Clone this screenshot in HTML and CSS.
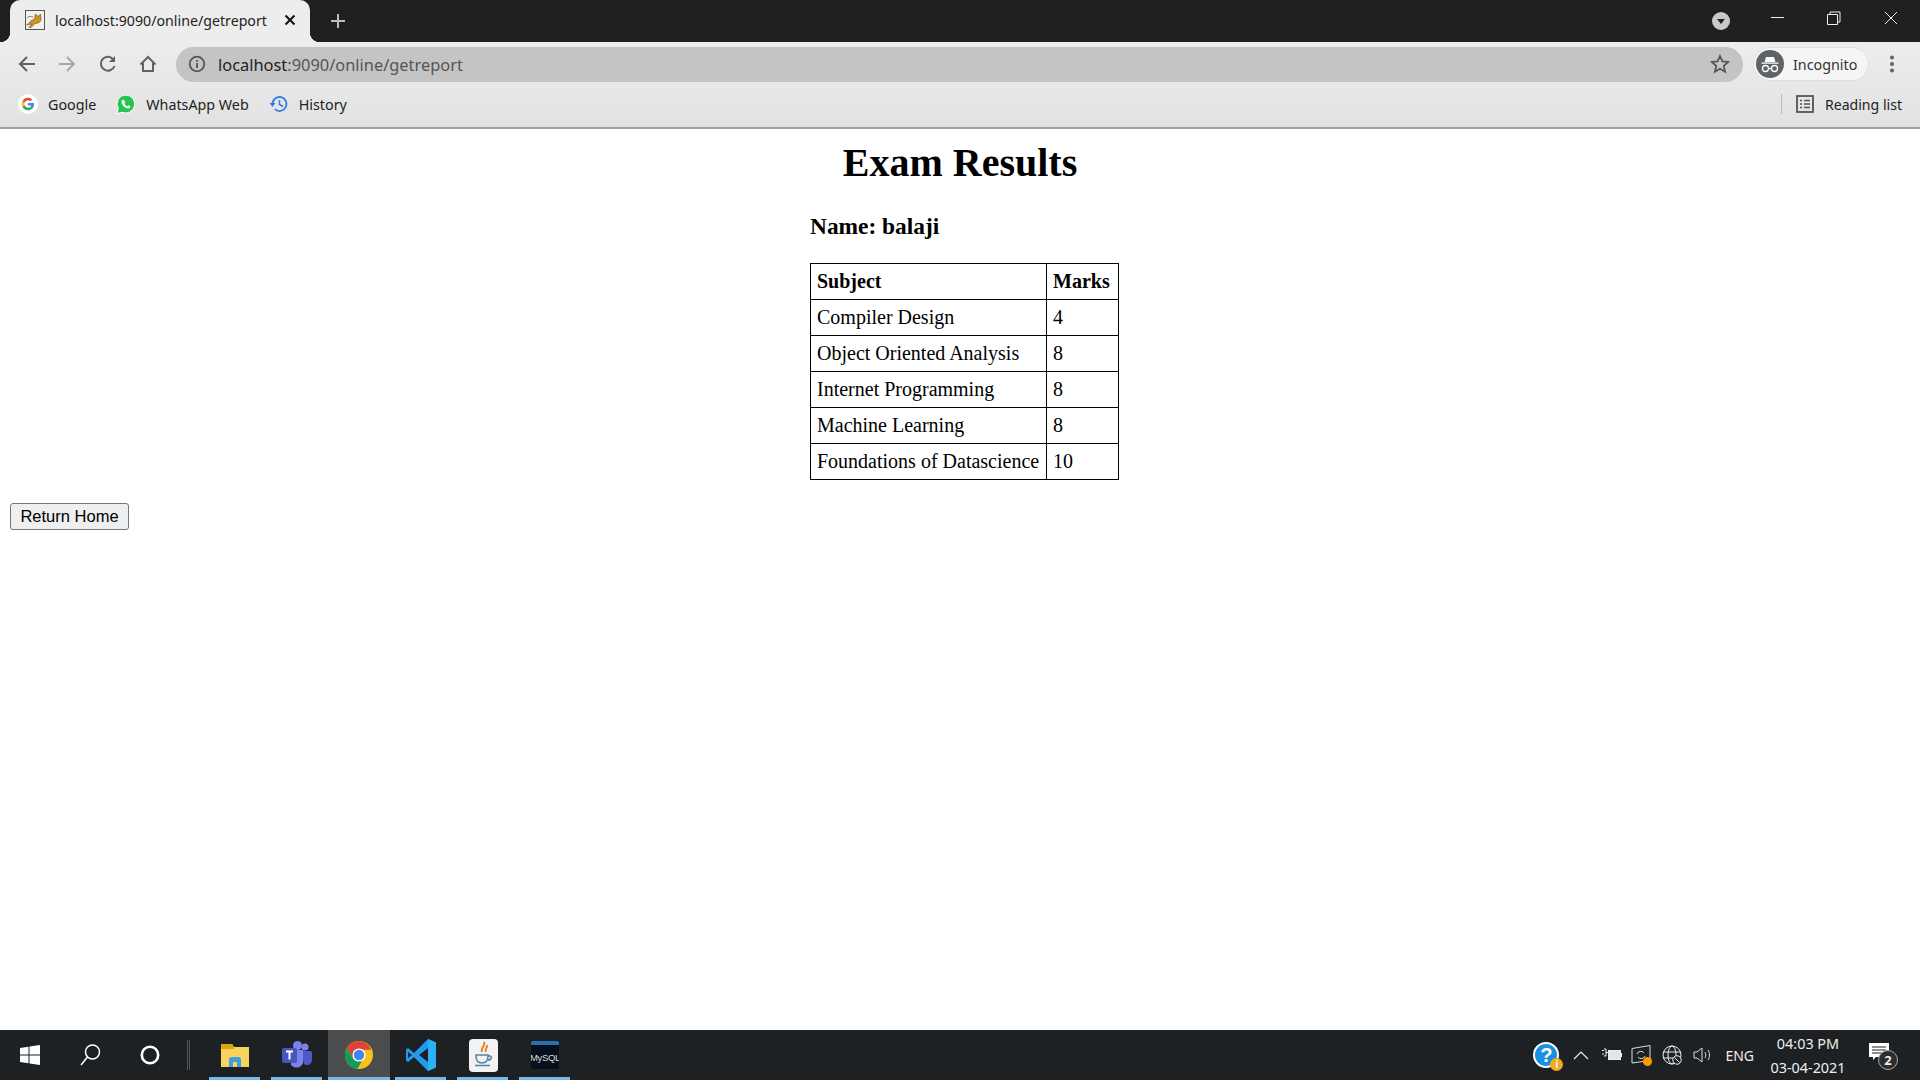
FILE: index.html
```html
<!DOCTYPE html>
<html lang="en">
<head>
  <meta charset="UTF-8" />
  <title>localhost:9090/online/getreport</title>
  <link rel="stylesheet" href="styles.css">
</head>
<body>
  <div class="screen">
    <!-- tab strip -->
    <div class="tabstrip">
      <div class="tab">
        <svg class="favicon" width="20" height="20" viewBox="0 0 20 20"><rect x="0.5" y="0.5" width="19" height="19" fill="#f4f1ea" stroke="#555"/><path d="M1.500 15c3-1 3-4 6-5l2-1 1-5 1.500 2h2l1.500-2 .5 5c0 2-1 3-3 4l-3 .5-4 4H4l3-3.500z" fill="#c9962f" stroke="#6b4a12" stroke-width=".6"/><path d="M2 8c2-2 4-2 6-1" fill="none" stroke="#666" stroke-width=".8"/></svg>
        <span class="tab-title">localhost:9090/online/getreport</span>
        <svg class="tab-close" width="12" height="12" viewBox="0 0 12 12"><path d="M1.500 1.500l9 9M10.500 1.500l-9 9" stroke="#111" stroke-width="2"/></svg>
      </div>
      <svg class="new-tab" width="16" height="16" viewBox="0 0 16 16"><path d="M8 1v14M1 8h14" stroke="#bdbdbd" stroke-width="2"/></svg>
      <div class="strip-right">
        <svg class="tab-search" width="18" height="18" viewBox="0 0 18 18"><circle cx="9" cy="9" r="9" fill="#c8c8c8"/><path d="M5 7h8l-4 5z" fill="#222"/></svg>
        <svg class="win-btn" width="16" height="16" viewBox="0 0 16 16"><path d="M1 7.500h13" stroke="#eee" stroke-width="1"/></svg>
        <svg class="win-btn" width="16" height="16" viewBox="0 0 16 16"><path d="M1.500 4.500h10v10h-10zM4 4.500v-2.500h10v10h-2.500" fill="none" stroke="#eee" stroke-width="1"/></svg>
        <svg class="win-btn" width="16" height="16" viewBox="0 0 16 16"><path d="M2 2l12 12M14 2l-12 12" stroke="#eee" stroke-width="1"/></svg>
      </div>
    </div>

    <!-- toolbar -->
    <div class="chrome-bars">
      <div class="toolbar">
        <svg class="nav-icon" width="20" height="20" viewBox="0 0 20 20"><path d="M18 10H3M10 3l-7 7 7 7" fill="none" stroke="#5f6368" stroke-width="2"/></svg>
        <svg class="nav-icon" width="20" height="20" viewBox="0 0 20 20"><path d="M2 10h15M10 3l7 7-7 7" fill="none" stroke="#a9a9a9" stroke-width="2"/></svg>
        <svg class="nav-icon" width="20" height="20" viewBox="0 0 20 20"><path d="M16.500 12a7 7 0 1 1-1-6.500" fill="none" stroke="#5f6368" stroke-width="2"/><path d="M17 2v6h-6z" fill="#5f6368"/></svg>
        <svg class="nav-icon" width="20" height="20" viewBox="0 0 20 20"><path d="M2.500 10.500L10 3l7.500 7.500M5 9v8h10V9" fill="none" stroke="#5f6368" stroke-width="2"/></svg>
        <div class="omnibox">
          <svg width="18" height="18" viewBox="0 0 18 18"><circle cx="9" cy="9" r="7.300" fill="none" stroke="#555" stroke-width="1.800"/><path d="M9 8v5M9 5v1.800" stroke="#555" stroke-width="1.800"/></svg>
          <span class="url"><span class="url-host">localhost</span>:9090/online/getreport</span>
          <svg class="star" width="20" height="20" viewBox="0 0 20 20"><path d="M10 2l2.400 5.400 5.800.6-4.400 3.900 1.300 5.800L10 14.700l-5.100 3 1.300-5.800L1.800 8l5.800-.6z" fill="none" stroke="#555" stroke-width="1.700"/></svg>
        </div>
        <div class="profile">
          <svg width="28" height="28" viewBox="0 0 28 28"><circle cx="14" cy="14" r="14" fill="#5f6368"/><path d="M10 7h8l1.500 5h-11zM5.500 12.500h17v1.300h-17z" fill="#fff"/><circle cx="9.500" cy="18.500" r="3" fill="none" stroke="#fff" stroke-width="1.300"/><circle cx="18.500" cy="18.500" r="3" fill="none" stroke="#fff" stroke-width="1.300"/><path d="M12.500 18.500h3" stroke="#fff" stroke-width="1.300"/></svg>
          <span>Incognito</span>
        </div>
        <svg class="dots" width="6" height="18" viewBox="0 0 6 18"><circle cx="3" cy="2.500" r="2" fill="#5f6368"/><circle cx="3" cy="9" r="2" fill="#5f6368"/><circle cx="3" cy="15.500" r="2" fill="#5f6368"/></svg>
      </div>

      <!-- bookmarks -->
      <div class="bookmarks">
        <div class="bookmark">
          <svg width="20" height="20" viewBox="0 0 20 20"><circle cx="10" cy="10" r="10" fill="#fff"/><path d="M16 10.200c0-.5 0-.9-.1-1.300H10v2.500h3.400a3 3 0 0 1-1.300 1.900l2 1.600c1.200-1.100 1.900-2.700 1.900-4.700z" fill="#4285f4"/><path d="M10 16.200c1.700 0 3.100-.6 4.100-1.500l-2-1.600c-.5.400-1.200.6-2.100.6-1.600 0-3-1.100-3.500-2.600l-2.100 1.600c1 2 3.200 3.500 5.600 3.500z" fill="#34a853"/><path d="M6.500 11.100a3.700 3.700 0 0 1 0-2.300L4.400 7.200a6.200 6.200 0 0 0 0 5.500z" fill="#fbbc05"/><path d="M10 6.300c.9 0 1.700.3 2.400.9l1.800-1.800A6.200 6.200 0 0 0 4.400 7.200l2.100 1.600C7 7.400 8.400 6.300 10 6.300z" fill="#ea4335"/></svg>
          <span>Google</span>
        </div>
        <div class="bookmark">
          <svg width="20" height="20" viewBox="0 0 20 20"><path d="M10 1a9 9 0 0 0-7.700 13.600L1 19.500l5-1.300A9 9 0 1 0 10 1z" fill="#25c350" stroke="#fff" stroke-width="1"/><path d="M7 5.500c-.5 0-1.500.9-1.500 2.400 0 2.500 3.500 6.300 6.500 6.600 1.400.1 2.500-1 2.500-2 0-.3-1.900-1.400-2.300-1.300l-1 1c-1-.3-2.400-1.700-2.800-2.800l.9-1C9 8 8 5.600 7 5.500z" fill="#fff"/></svg>
          <span>WhatsApp Web</span>
        </div>
        <div class="bookmark">
          <svg width="20" height="20" viewBox="0 0 20 20"><path d="M3.500 10a7 7 0 1 1 2.300 5.200" fill="none" stroke="#2f7de1" stroke-width="1.800"/><path d="M.5 9h6L3.500 13z" fill="#2f7de1"/><path d="M10.500 6v4.500l3.500 2" fill="none" stroke="#2f7de1" stroke-width="1.600"/></svg>
          <span>History</span>
        </div>
        <div class="reading">
          <svg width="18" height="18" viewBox="0 0 18 18"><rect x="1" y="1" width="16" height="16" fill="none" stroke="#555" stroke-width="1.800"/><path d="M4 5.500h2M8 5.500h6M4 9h2M8 9h6M4 12.500h2M8 12.500h6" stroke="#555" stroke-width="1.500"/></svg>
          <span>Reading list</span>
        </div>
      </div>
    </div>

    <!-- page content -->
    <main class="page">
      <h1>Exam Results</h1>
      <div class="report">
        <h3>Name: balaji</h3>
        <table class="marks">
          <tr><th class="col-subject">Subject</th><th class="col-marks">Marks</th></tr>
          <tr><td>Compiler Design</td><td>4</td></tr>
          <tr><td>Object Oriented Analysis</td><td>8</td></tr>
          <tr><td>Internet Programming</td><td>8</td></tr>
          <tr><td>Machine Learning</td><td>8</td></tr>
          <tr><td>Foundations of Datascience</td><td>10</td></tr>
        </table>
      </div>
      <button class="home-btn">Return Home</button>
    </main>

    <!-- windows taskbar -->
    <footer class="taskbar">
      <div class="sys-btn">
        <svg width="20" height="20" viewBox="0 0 20 20"><path d="M0 3l8.500-1.200V9.500H0zM9.500 1.600L20 0v9.500H9.500zM0 10.500h8.500v7.700L0 17zM9.500 10.500H20V20L9.500 18.400z" fill="#fff"/></svg>
      </div>
      <div class="sys-btn">
        <svg width="22" height="24" viewBox="0 0 22 24"><circle cx="13.500" cy="9" r="7" fill="none" stroke="#fff" stroke-width="1.500"/><path d="M8.500 14L2 22" stroke="#fff" stroke-width="1.500"/></svg>
      </div>
      <div class="sys-btn">
        <svg width="20" height="20" viewBox="0 0 20 20"><circle cx="10" cy="10" r="8.200" fill="none" stroke="#fff" stroke-width="2.600"/></svg>
      </div>
      <div class="task-sep"></div>
      <div class="app">
        <svg width="28" height="26" viewBox="0 0 28 26"><path d="M0 2h11l2 3h15v20H0z" fill="#f9d25c"/><path d="M0 2h11l2 3v2H0z" fill="#e0a410"/><path d="M8 25v-7a3 3 0 0 1 3-3h6a3 3 0 0 1 3 3v7h-4v-5h-4v5z" fill="#3b9fe0"/></svg>
      </div>
      <div class="app">
        <svg width="30" height="30" viewBox="0 0 30 30"><circle cx="23" cy="7" r="3.500" fill="#7b83eb"/><circle cx="15.500" cy="5.500" r="4.500" fill="#7b83eb"/><path d="M19 11h9a2 2 0 0 1 2 2v7a5 5 0 0 1-8 4z" fill="#5059c9"/><path d="M9 10h12v13a7 7 0 0 1-12 2z" fill="#7b83eb"/><rect x="0" y="8" width="15" height="15" rx="2" fill="#4b53bc"/><path d="M4 11.500h7M7.500 11.500v8" stroke="#fff" stroke-width="2"/></svg>
      </div>
      <div class="app app-active">
        <svg width="28" height="32" viewBox="0 0 32 32"><circle cx="16" cy="16" r="16" fill="#fbc116"/><path d="M16 0A16 16 0 0 0 2.100 8l7 12L16 10h13.900A16 16 0 0 0 16 0z" fill="#db4437"/><path d="M2.100 8A16 16 0 0 0 14 31.900L21 20H9.100z" fill="#0f9d58"/><circle cx="16" cy="16" r="7.500" fill="#fff"/><circle cx="16" cy="16" r="6" fill="#4285f4"/></svg>
      </div>
      <div class="app">
        <svg width="30" height="32" viewBox="0 0 30 32"><path d="M22 0l8 3.500v25L22 32 8 18 2 23 0 21.500v-11L2 9l6 5z" fill="#1f9cf0"/><path d="M22 0v32l8-3.500v-25z" fill="#2db1f5"/><path d="M22 9l-9 7 9 7z" fill="#1c1f23"/><path d="M2 13l4 3-4 3z" fill="#1c1f23"/></svg>
      </div>
      <div class="app">
        <div class="java-tile">
          <svg width="22" height="28" viewBox="0 0 22 28"><path d="M12 1c2 4-4 6-2 10M15 4c1 3-3 4-1 7" fill="none" stroke="#e8791f" stroke-width="1.800"/><path d="M4 14h12v1c0 5-2 7-6 7s-6-2-6-7zM16 15h2c2 0 2 4-2 4" fill="none" stroke="#5382a1" stroke-width="1.500"/><path d="M3 24.500h15" stroke="#5382a1" stroke-width="1.500"/></svg>
        </div>
      </div>
      <div class="app">
        <div class="mysql-tile"><span>MySQL</span></div>
      </div>

      <div class="tray">
        <div class="help-icon">?<span class="help-badge">i</span></div>
        <svg class="tray-icon tray-chevron" width="16" height="10" viewBox="0 0 16 10"><path d="M1 9l7-7 7 7" fill="none" stroke="#eee" stroke-width="1.200"/></svg>
        <svg class="tray-icon tray-battery" width="20" height="14" viewBox="0 0 20 14"><path d="M0 2.500h2M0 6h2M2 1h2v7H2M4 4.500h2" stroke="#eee" fill="none"/><rect x="6.500" y="2.500" width="12" height="9" fill="#e4e4e4" stroke="#eee"/><rect x="18.500" y="5" width="1.500" height="4" fill="#eee"/></svg>
        <div class="sync-icon">
          <svg width="20" height="20" viewBox="0 0 20 20"><path d="M1 3.500L19 .5v15L1 18z" fill="none" stroke="#ddd"/><path d="M6 9a4 4 0 0 1 7-1M14 11a4 4 0 0 1-7 1" fill="none" stroke="#ddd"/></svg>
          <span class="sync-dot"></span>
        </div>
        <svg class="tray-icon tray-globe" width="20" height="20" viewBox="0 0 20 20"><circle cx="10" cy="10" r="9" fill="none" stroke="#eee"/><ellipse cx="10" cy="10" rx="4" ry="9" fill="none" stroke="#eee"/><path d="M1 7h18M1 13h18" stroke="#eee"/><circle cx="15" cy="15" r="4.200" fill="#1f2124" stroke="#eee"/><path d="M12.500 12.500l5 5" stroke="#eee"/></svg>
        <svg class="tray-icon" width="20" height="18" viewBox="0 0 20 18"><path d="M1 6h3l5-4v14l-5-4H1z" fill="none" stroke="#ddd"/><path d="M12 6c1 2 1 4 0 6M15 4c2 3 2 7 0 10" fill="none" stroke="#ddd"/></svg>
        <span class="lang">ENG</span>
        <div class="clock"><span>04:03 PM</span><span>03-04-2021</span></div>
        <div class="notify">
          <svg width="20" height="18" viewBox="0 0 20 18"><path d="M0 0h20v14H7l-3 3v-3H0z" fill="#fff"/><path d="M3 4h14M3 7h14M3 10h10" stroke="#222" stroke-width="1"/></svg>
          <span class="notify-count">2</span>
        </div>
      </div>
    </footer>
  </div>
</body>
</html>
```

FILE: styles.css
```css
* {
  box-sizing: border-box;
}
html, body {
  margin: 0;
  height: 100%;
  overflow: hidden;
}
.screen {
  width: 1920px;
  height: 1080px;
  display: flex;
  flex-direction: column;
  background: #fff;
}

/* tab strip */
.tabstrip {
  height: 42px;
  background: #202020;
  display: flex;
  align-items: flex-end;
  padding-left: 10px;
}
.tab {
  position: relative;
  width: 300px;
  height: 42px;
  background: #ededed;
  border-radius: 10px 10px 0 0;
  display: flex;
  align-items: center;
  padding: 0 14px 2px 15px;
  font: 14.200px "Noto Sans", sans-serif;
  color: #222;
}
/* the small flares at the foot of the tab */
.tab::before, .tab::after {
  content: "";
  position: absolute;
  bottom: 0;
  width: 10px;
  height: 10px;
}
.tab::before {
  left: -10px;
  background: radial-gradient(circle at 0 0, transparent 10px, #ededed 10.500px);
}
.tab::after {
  right: -10px;
  background: radial-gradient(circle at 100% 0, transparent 10px, #ededed 10.500px);
}
.favicon {
  flex: none;
}
.tab-title {
  margin-left: 10px;
  flex: 1;
  white-space: nowrap;
}
.new-tab {
  margin: 0 0 13px 20px;
}
.strip-right {
  margin-left: auto;
  align-self: stretch;
  display: flex;
  align-items: flex-start;
}
.tab-search {
  margin: 12px 40px 0 0;
}
.win-btn {
  margin-top: 10px;
  margin-right: 40px;
}
.win-btn:nth-child(3) {
  margin-right: 41px;
}
.win-btn:last-child {
  margin-right: 21px;
}

/* toolbar + bookmarks */
.chrome-bars {
  height: 87px;
  background: linear-gradient(to bottom, #ededed, #e2e2e2);
  border-bottom: 2px solid #a0a0a0;
}
.toolbar {
  height: 43px;
  display: flex;
  align-items: center;
  padding: 1px 18px 0 17px;
}
.nav-icon {
  margin-right: 20px;
}
.nav-icon:nth-child(2) {
  margin-right: 21px;
}
.nav-icon:nth-child(4) {
  margin-right: 18px;
}
.omnibox {
  width: 1567px;
  height: 35px;
  border-radius: 18px;
  background: #c4c4c4;
  display: flex;
  align-items: center;
  padding: 0 13px 0 12px;
}
.url {
  margin-left: 12px;
  font: 16.400px "Noto Sans", sans-serif;
  color: #555;
  white-space: nowrap;
}
.url-host {
  color: #222;
}
.star {
  margin-left: auto;
}
.profile {
  margin-left: 10px;
  width: 116px;
  height: 34px;
  border-radius: 17px;
  background: #f5f5f5;
  border: 1px solid #e0e0e0;
  display: flex;
  align-items: center;
  padding-left: 2px;
  gap: 9px;
  font: 14.300px "Noto Sans", sans-serif;
  color: #333;
}
.dots {
  margin-left: 20px;
}
.bookmarks {
  height: 42px;
  padding-bottom: 4px;
  display: flex;
  align-items: center;
  padding-left: 18px;
  font: 14.300px "Noto Sans", sans-serif;
  color: #222;
}
.bookmark {
  display: flex;
  align-items: center;
  gap: 10px;
  margin-right: 20px;
}
.reading {
  margin-left: auto;
  height: 20px;
  border-left: 1px solid #bbb;
  display: flex;
  align-items: center;
  gap: 11px;
  padding: 0 18px 0 14px;
  font-size: 14.100px;
}

/* page */
.page {
  flex: 1;
  padding: 0 10px;
  font: 20px "Liberation Serif", serif;
  color: #000;
}
h1 {
  font-size: 40px;
  line-height: 46px;
  text-align: center;
  margin: 11px 0 0;
}
.report {
  width: 300px;
  margin: 0 auto;
}
h3 {
  font-size: 23.400px;
  line-height: 27px;
  margin: 27px 0 0;
}
.marks {
  border-collapse: collapse;
  margin-top: 23px;
  white-space: nowrap;
  table-layout: fixed;
  width: 308px;
}
.col-subject {
  width: 236px;
}
.col-marks {
  width: 72px;
}
.marks th, .marks td {
  border: 1px solid #000;
  padding: 6px;
  text-align: left;
  line-height: 23px;
}
.home-btn {
  display: block;
  margin-top: 23px;
  height: 27px;
  width: 119px;
  padding: 0;
  font: 16.500px "Liberation Sans", sans-serif;
  color: #000;
  background: #efefef;
  border: 1px solid #767676;
  border-radius: 3px;
}

/* taskbar */
.taskbar {
  height: 50px;
  background: #1e2124;
  display: flex;
  align-items: stretch;
  color: #eee;
}
.sys-btn {
  width: 60px;
  display: flex;
  align-items: center;
  justify-content: center;
}
.task-sep {
  width: 3px;
  height: 30px;
  margin: 10px 14px 0 7px;
  border-left: 1px solid #555;
  border-right: 1px solid #555;
}
.app {
  width: 62px;
  display: flex;
  align-items: center;
  justify-content: center;
  position: relative;
}
.app::after {
  content: "";
  position: absolute;
  left: 5px;
  right: 6px;
  bottom: 0;
  height: 3px;
  background: #76b9ed;
}
.app-active {
  background: #4a4c4e;
}
.app-active::after {
  left: 0;
  right: 0;
}
.java-tile {
  width: 29px;
  height: 33px;
  background: #f2f2f2;
  border-radius: 4px;
  display: flex;
  align-items: center;
  justify-content: center;
}
.mysql-tile {
  width: 28px;
  height: 28px;
  background: #05101c;
  border-top: 4px solid #2c6fb0;
  border-radius: 2px;
  display: flex;
  align-items: center;
  justify-content: center;
  overflow: hidden;
}
.mysql-tile span {
  font: 9.500px "Liberation Sans", sans-serif;
  letter-spacing: -0.3px;
  color: #ddd;
}
.tray {
  margin-left: auto;
  display: flex;
  align-items: center;
}
.tray-icon {
  margin-right: 10px;
  flex: none;
}
.tray-chevron {
  margin-right: 13px;
}
.tray-battery {
  margin-right: 9px;
}
.tray-globe {
  margin-right: 11px;
}
.help-icon {
  width: 26px;
  height: 26px;
  border-radius: 50%;
  background: #1b8fe0;
  border: 2px solid #fff;
  color: #fff;
  font: bold 20px/22px "Liberation Sans", sans-serif;
  text-align: center;
  position: relative;
  margin-right: 14px;
}
.help-badge {
  position: absolute;
  right: -6px;
  bottom: -5px;
  width: 13px;
  height: 13px;
  border-radius: 50%;
  background: #f5a623;
  font: bold 10px/13px "Liberation Sans", sans-serif;
}
.sync-icon {
  position: relative;
  width: 20px;
  height: 20px;
  margin-right: 11px;
}
.sync-dot {
  position: absolute;
  right: -1px;
  bottom: -1px;
  width: 9px;
  height: 9px;
  border-radius: 50%;
  background: #ff9800;
}
.lang {
  font: 14px "Noto Sans", sans-serif;
  margin-left: 2px;
}
.clock {
  display: flex;
  flex-direction: column;
  align-items: center;
  width: 90px;
  margin-left: 9px;
  padding-top: 1px;
  font: 14.400px/24px "Noto Sans", sans-serif;
}
.notify {
  position: relative;
  width: 24px;
  height: 24px;
  margin: 0 27px 0 16px;
}
.notify-count {
  position: absolute;
  left: 9px;
  top: 7px;
  width: 20px;
  height: 20px;
  border-radius: 50%;
  background: #2b2d30;
  border: 1px solid #aaa;
  text-align: center;
  font: bold 13px/18px "Noto Sans", sans-serif;
  color: #eee;
}
```
